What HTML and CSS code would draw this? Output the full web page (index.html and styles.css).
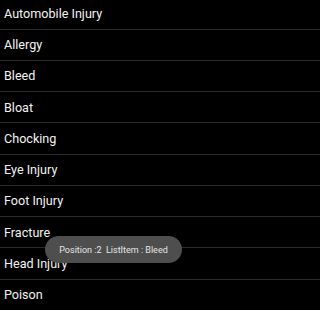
FILE: index.html
```html
<!DOCTYPE html>
<html>
<head>
<meta charset="utf-8">
<link rel="stylesheet" href="styles.css">
</head>
<body>
<ul class="list">
  <li class="item">Automobile Injury</li>
  <li class="item">Allergy</li>
  <li class="item">Bleed</li>
  <li class="item">Bloat</li>
  <li class="item">Chocking</li>
  <li class="item">Eye Injury</li>
  <li class="item">Foot Injury</li>
  <li class="item">Fracture</li>
  <li class="item">Head Injury</li>
  <li class="item">Poison</li>
</ul>
<div class="toast">Position :2&nbsp; ListItem : Bleed</div>
</body>
</html>
```
FILE: styles.css
```css
html, body {
  margin: 0;
  padding: 0;
  background: #000;
  height: 310px;
  overflow: hidden;
}
body {
  position: relative;
  font-family: Roboto, "Liberation Sans", sans-serif;
}
.list {
  list-style: none;
  margin: -1.75px 0 0 0;
  padding: 0;
  display: flex;
  flex-direction: column;
}
.item {
  height: 30.25px;
  box-sizing: content-box;
  border-bottom: 1px solid #2a2a2a;
  display: flex;
  align-items: center;
  padding-left: 4px;
  color: #f2f2f2;
  font-size: 12.6px;
}
.toast {
  position: absolute;
  left: 45px;
  top: 236px;
  width: 137px;
  height: 27px;
  border-radius: 14px;
  background: #4e4e4e;
  color: #e6e6e6;
  font-size: 9px;
  display: flex;
  align-items: center;
  justify-content: center;
}
```
